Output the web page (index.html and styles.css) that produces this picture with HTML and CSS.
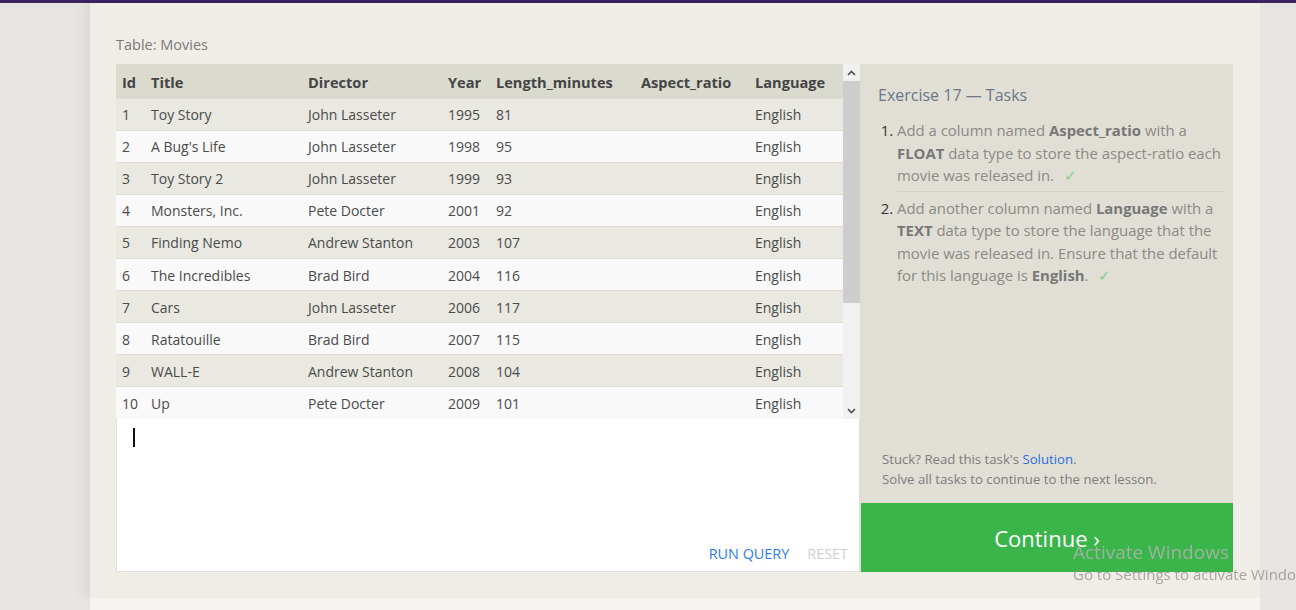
FILE: index.html
```html
<!DOCTYPE html>
<html lang="en">
<head>
<meta charset="utf-8">
<title>SQL Lesson 17</title>
<link rel="stylesheet" href="styles.css">
</head>
<body>
<div class="topbar"></div>
<main class="page">
  <section class="card">
    <div class="table-label">Table: Movies</div>
    <div class="workspace">
      <div class="left">
        <div class="results">
          <div class="table-wrap">
            <table class="data">
              <colgroup>
                <col class="c-id"><col class="c-title"><col class="c-dir"><col class="c-year"><col class="c-len"><col class="c-asp"><col class="c-lang">
              </colgroup>
              <thead>
                <tr><th>Id</th><th>Title</th><th>Director</th><th>Year</th><th>Length_minutes</th><th>Aspect_ratio</th><th>Language</th></tr>
              </thead>
              <tbody>
                <tr><td>1</td><td>Toy Story</td><td>John Lasseter</td><td>1995</td><td>81</td><td></td><td>English</td></tr>
                <tr><td>2</td><td>A Bug's Life</td><td>John Lasseter</td><td>1998</td><td>95</td><td></td><td>English</td></tr>
                <tr><td>3</td><td>Toy Story 2</td><td>John Lasseter</td><td>1999</td><td>93</td><td></td><td>English</td></tr>
                <tr><td>4</td><td>Monsters, Inc.</td><td>Pete Docter</td><td>2001</td><td>92</td><td></td><td>English</td></tr>
                <tr><td>5</td><td>Finding Nemo</td><td>Andrew Stanton</td><td>2003</td><td>107</td><td></td><td>English</td></tr>
                <tr><td>6</td><td>The Incredibles</td><td>Brad Bird</td><td>2004</td><td>116</td><td></td><td>English</td></tr>
                <tr><td>7</td><td>Cars</td><td>John Lasseter</td><td>2006</td><td>117</td><td></td><td>English</td></tr>
                <tr><td>8</td><td>Ratatouille</td><td>Brad Bird</td><td>2007</td><td>115</td><td></td><td>English</td></tr>
                <tr><td>9</td><td>WALL-E</td><td>Andrew Stanton</td><td>2008</td><td>104</td><td></td><td>English</td></tr>
                <tr><td>10</td><td>Up</td><td>Pete Docter</td><td>2009</td><td>101</td><td></td><td>English</td></tr>
              </tbody>
            </table>
          </div>
          <div class="scrollbar">
            <div class="sb-btn">
              <svg width="9" height="6" viewBox="0 0 9 6"><path d="M1 5 L4.5 1.5 L8 5" fill="none" stroke="#505050" stroke-width="1.6"/></svg>
            </div>
            <div class="sb-track"><div class="sb-thumb"></div></div>
            <div class="sb-btn">
              <svg width="9" height="6" viewBox="0 0 9 6"><path d="M1 1 L4.5 4.5 L8 1" fill="none" stroke="#505050" stroke-width="1.6"/></svg>
            </div>
          </div>
        </div>
        <div class="editor">
          <div class="caret"></div>
          <div class="editor-actions">
            <span class="run">RUN QUERY</span>
            <span class="reset">RESET</span>
          </div>
        </div>
      </div>
      <aside class="tasks">
        <div class="tasks-body">
          <h2 class="tasks-title">Exercise 17 — Tasks</h2>
          <ol class="task-list">
            <li>Add a column named <b>Aspect_ratio</b> with a <b>FLOAT</b> data type to store the aspect-ratio each movie was released in. <span class="check">✓</span></li>
            <li>Add another column named <b>Language</b> with a <b>TEXT</b> data type to store the language that the movie was released in. Ensure that the default for this language is <b>English</b>. <span class="check">✓</span></li>
          </ol>
          <div class="stuck">
            <p>Stuck? Read this task's <a class="link">Solution</a>.</p>
            <p>Solve all tasks to continue to the next lesson.</p>
          </div>
        </div>
        <div class="continue">Continue ›</div>
      </aside>
    </div>
  </section>
  <section class="next-card"></section>
</main>
<div class="watermark">
  <div class="wm-title">Activate Windows</div>
  <div class="wm-sub">Go to Settings to activate Windows.</div>
</div>
</body>
</html>
```

FILE: styles.css
```css
* { box-sizing: border-box; }
html, body { margin: 0; padding: 0; }
body {
  background: #e7e4e1;
  font-family: "Open Sans", "Liberation Sans", sans-serif;
  color: #4a4a4a;
  height: 610px;
  overflow: hidden;
}
.topbar {
  height: 3px;
  background: #3d2160;
}
.page {
  margin-left: 90px;
  width: 1170px;
}
.card {
  background: #efede6;
  padding: 32px 27px 26px 26px;
  box-shadow: -6px 0 10px rgba(0,0,0,0.05);
  height: 595px;
}
.table-label {
  font-size: 14.5px;
  line-height: 20px;
  color: #7a7a7a;
  margin-bottom: 9px;
}
.workspace {
  display: flex;
}
.left {
  width: 744px;
  display: flex;
  flex-direction: column;
}
.results {
  display: flex;
  height: 355px;
  background: #f9f9f9;
}
.table-wrap {
  width: 727px;
  overflow: hidden;
}
.data {
  border-collapse: collapse;
  width: 727px;
  table-layout: fixed;
  font-size: 14px;
}
.c-id { width: 29px; }
.c-title { width: 157px; }
.c-dir { width: 140px; }
.c-year { width: 48px; }
.c-len { width: 145px; }
.c-asp { width: 114px; }
.c-lang { width: 94px; }
.data th {
  text-align: left;
  font-weight: 700;
  font-size: 14.6px;
  color: #444;
  background: #dbdacf;
  height: 34px;
  padding: 3px 6px 0;
  white-space: nowrap;
}
.data td {
  height: 32.1px;
  padding: 1px 6px 0;
  color: #4b4b4b;
  border-top: 1px solid #dddbd3;
  white-space: nowrap;
}
.data tbody tr:nth-child(odd) td { background: #e9e8e1; }
.data tbody tr:nth-child(even) td { background: #f9f9f9; }
.scrollbar {
  width: 17px;
  display: flex;
  flex-direction: column;
  background: #f1f1f1;
}
.sb-btn {
  height: 17px;
  display: flex;
  align-items: center;
  justify-content: center;
}
.sb-track {
  flex: 1;
}
.sb-thumb {
  height: 222px;
  background: #cdcdcd;
}
.editor {
  height: 153px;
  background: #fff;
  border: 1px solid #e2e0d8;
  border-top: none;
  position: relative;
}
.caret {
  position: absolute;
  left: 16px;
  top: 9px;
  width: 2px;
  height: 19px;
  background: #111;
}
.editor-actions {
  position: absolute;
  right: 11px;
  bottom: 8px;
  font-size: 14.4px;
  display: flex;
  gap: 18px;
}
.run { color: #2b7de9; }
.reset { color: #cfcfcf; }
.tasks {
  width: 373px;
  display: flex;
  flex-direction: column;
  background: #e1dfd5;
}
.tasks-body {
  flex: 1;
  padding: 20px 8px 14px 18px;
  display: flex;
  flex-direction: column;
}
.tasks-title {
  margin: 0;
  font-size: 16px;
  font-weight: 400;
  line-height: 22px;
  color: #6c7684;
}
.task-list {
  margin: 13px 0 0 0;
  padding: 0 0 0 19px;
  font-size: 14.9px;
  line-height: 22.5px;
  color: #8a8a87;
}
.task-list li::marker { color: #333; }
.task-list li + li {
  border-top: 1px solid #d3d1c6;
  margin-top: 4px;
  padding-top: 5px;
}
.task-list b { color: #777; }
.check {
  color: #7fd08a;
  margin-left: 6px;
}
.stuck {
  margin-top: auto;
  font-size: 13.2px;
  line-height: 20px;
  color: #7c7c7c;
  padding-left: 4px;
}
.stuck p { margin: 0; }
.link { color: #2a6fdb; }
.continue {
  height: 69px;
  background: #39b54a;
  color: #fff;
  font-size: 22px;
  display: flex;
  align-items: center;
  justify-content: center;
  margin-left: 1px;
}
.next-card {
  height: 20px;
  background: #f5f4f0;
}
.watermark {
  position: fixed;
  left: 1073px;
  top: 539px;
  white-space: nowrap;
}
.wm-title {
  font-size: 19px;
  line-height: 26px;
  color: rgba(178,178,178,0.85);
}
.wm-sub {
  font-size: 15px;
  line-height: 20px;
  margin-top: -1px;
  color: rgba(140,140,140,0.75);
}
```
